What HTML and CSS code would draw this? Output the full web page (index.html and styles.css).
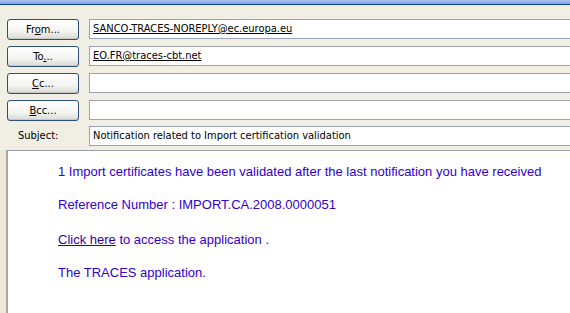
FILE: index.html
```html
<!DOCTYPE html>
<html>
<head>
<meta charset="UTF-8">
<title>Notification</title>
<link rel="stylesheet" href="styles.css">
</head>
<body>
<div class="titlebar"></div>
<div class="header">
  <div class="row">
    <div class="button">Fr<u>o</u>m...</div>
    <div class="field"><u>SANCO-TRACES-NOREPLY@ec.europa.eu</u></div>
  </div>
  <div class="row">
    <div class="button">To<u>.</u>..</div>
    <div class="field"><u>EO.FR@traces-cbt.net</u></div>
  </div>
  <div class="row">
    <div class="button"><u>C</u>c...</div>
    <div class="field"></div>
  </div>
  <div class="row">
    <div class="button"><u>B</u>cc...</div>
    <div class="field"></div>
  </div>
  <div class="row subject-row">
    <div class="label">Sub<u>j</u>ect:</div>
    <div class="field">Notification related to Import certification validation</div>
  </div>
</div>
<div class="message">
  <p>1 Import certificates have been validated after the last notification you have received</p>
  <p class="ref">Reference Number : IMPORT.CA.2008.0000051</p>
  <p><a href="#">Click here</a> to access the application .</p>
  <p>The TRACES application.</p>
</div>
</body>
</html>
```

FILE: styles.css
```css
* {
  margin: 0;
  padding: 0;
}

html, body {
  height: 100%;
}

body {
  display: flex;
  flex-direction: column;
  background-color: #ece9d8;
  font-family: "DejaVu Sans Condensed", "Liberation Sans", sans-serif;
  font-size: 11px;
  overflow: hidden;
}

.titlebar {
  height: 5px;
  background: linear-gradient(#a9c4ee, #7fa4e0 70%, #1f4fa8 80%, #0a3a8c);
}

.header {
  padding: 14px 0 4px 7px;
  background-color: #f1efe3;
}

.row {
  display: flex;
  align-items: flex-start;
  margin-bottom: 6px;
}

.subject-row {
  margin-bottom: 0;
  margin-top: -1px;
}

.button {
  width: 70px;
  height: 19px;
  line-height: 19px;
  margin-right: 10px;
  text-align: center;
  color: #000;
  border: 1px solid #2c4f7c;
  border-radius: 3px;
  background: linear-gradient(#ffffff, #f4f4f0 60%, #d8d8d4);
  box-shadow: inset 0 -1px 0 #c8c8c4;
}

.label {
  width: 71px;
  padding-left: 11px;
  height: 20px;
  line-height: 20px;
  color: #000;
}

.field {
  flex: 1;
  height: 18px;
  line-height: 18px;
  padding-left: 3px;
  background-color: #fff;
  border: 1px solid #9ba2b2;
  border-right: none;
  color: #000;
  white-space: nowrap;
}

.message {
  flex: 1;
  margin-left: 6px;
  background-color: #fff;
  border-top: 1px solid #98a0b0;
  border-left: 2px solid #a8a8a4;
  padding: 13px 0 0 50px;
  font-family: "Liberation Sans", Arial, sans-serif;
  font-size: 13px;
  color: #3300cc;
}

.message p {
  line-height: 15px;
  margin-bottom: 18px;
}

.message .ref {
  margin-bottom: 20px;
}

.message a {
  color: #330099;
}
```
